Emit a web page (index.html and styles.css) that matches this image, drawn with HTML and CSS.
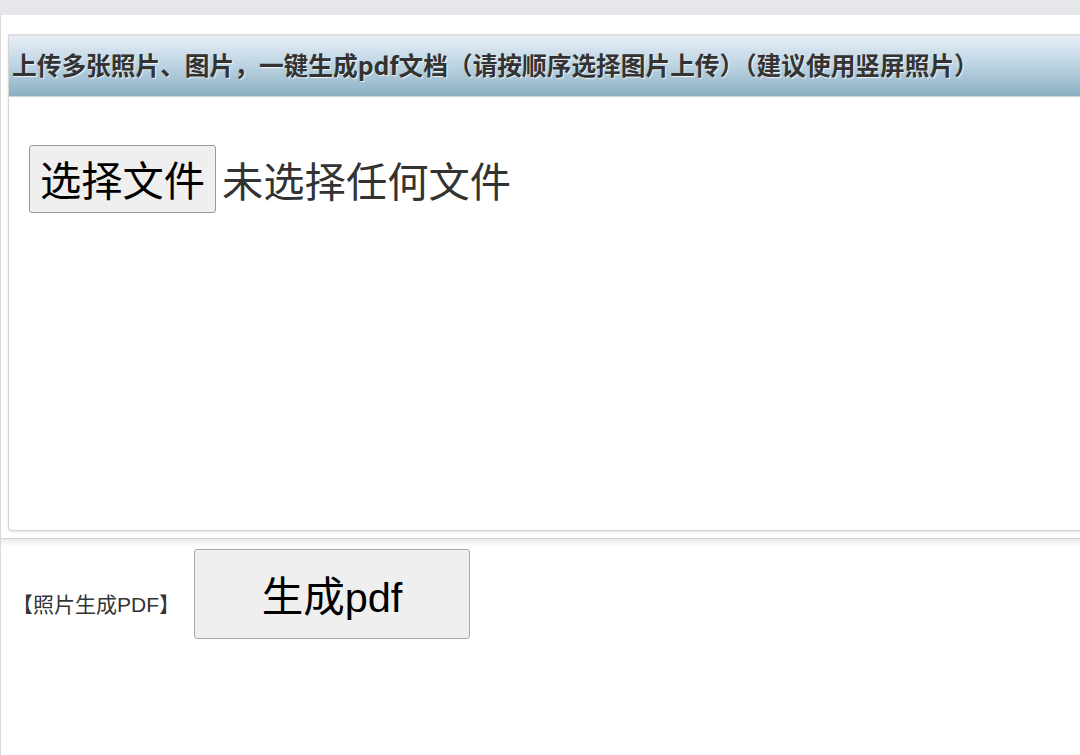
FILE: index.html
```html
<!DOCTYPE html>
<html lang="zh-CN">
<head>
<meta charset="utf-8">
<title>照片生成PDF</title>
<link rel="stylesheet" href="styles.css">
</head>
<body>
<div class="topbar"></div>
<div class="page">
  <div class="panel-wrap">
    <div class="panel">
      <div class="panel-head">上传多张照片、图片，一键生成pdf文档（请按顺序选择图片上传）（建议使用竖屏照片）</div>
      <div class="panel-body">
        <div class="file-row">
          <span class="file-btn">选择文件</span>
          <span class="file-name">未选择任何文件</span>
        </div>
      </div>
    </div>
  </div>
  <div class="actions">
    <span class="action-label">【照片生成PDF】</span>
    <button class="gen-btn" type="button">生成pdf</button>
  </div>
</div>
</body>
</html>
```

FILE: styles.css
```css
html, body {
  margin: 0;
  padding: 0;
}
body {
  background: #e6e7eb;
  overflow: hidden;
  font-family: "Liberation Sans", "Noto Sans CJK SC", sans-serif;
  color: #333;
}
.topbar {
  height: 15px;
  background: #e6e7eb;
}
.page {
  background: #fff;
  border-left: 1px solid #d9d9d9;
  height: 740px;
}
.panel-wrap {
  padding: 19px 0 0 7px;
}
.panel {
  width: 1100px;
  border: 1px solid #d4d4d4;
  border-top: 2px solid #dedede;
  border-right: none;
  border-radius: 0 0 0 4px;
  box-shadow: 0 1px 2px rgba(0, 0, 0, 0.12);
  background: #fff;
}
.panel-head {
  height: 60px;
  line-height: 56px;
  padding-left: 3px;
  background: linear-gradient(to bottom, #e6eef7 0%, #bcd3e2 50%, #89afc2 100%);
  font-family: "Noto Sans CJK SC", sans-serif;
  font-weight: bold;
  font-size: 24.7px;
  color: #333;
  text-shadow: 1px 1px 1px #f2f2f2;
  white-space: nowrap;
  border-bottom: 1px solid #c9d8e0;
}
.panel-body {
  height: 433px;
  padding: 48px 0 0 20px;
  box-sizing: border-box;
}
.file-row {
  display: flex;
  align-items: center;
  gap: 6px;
}
.file-btn {
  display: inline-block;
  width: 187px;
  height: 68px;
  box-sizing: border-box;
  line-height: 64px;
  text-align: center;
  background: #efefef;
  border: 1px solid #9a9a9a;
  border-radius: 3px;
  font-family: "Noto Sans CJK SC", sans-serif;
  font-size: 41.3px;
  color: #000;
}
.file-name {
  font-family: "Noto Sans CJK SC", sans-serif;
  font-size: 41.3px;
  color: #333;
  line-height: 67px;
}
.actions {
  margin-top: 7px;
  border-top: 1px solid #d0d0d0;
  background: linear-gradient(to bottom, #ececec 0px, #ffffff 8px);
  padding: 10px 0 0 11px;
  display: flex;
  align-items: baseline;
  gap: 14px;
}
.action-label {
  font-family: "Liberation Sans", "Noto Sans CJK SC", sans-serif;
  font-size: 21px;
  color: #333;
}
.gen-btn {
  width: 276px;
  height: 90px;
  background: #efefef;
  border: 1px solid #a8a8a8;
  border-radius: 3px;
  font-family: "Liberation Sans", "Noto Sans CJK SC", sans-serif;
  font-size: 41.5px;
  color: #000;
  padding: 0;
}
```
